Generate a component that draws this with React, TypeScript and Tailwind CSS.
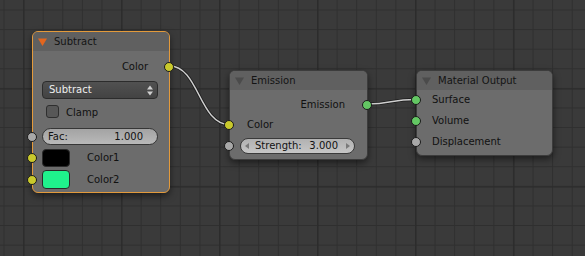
import React from "react";

const Socket = ({ cls, side }: { cls: string; side: "l" | "r" }) => (
  <span
    className={`absolute top-1/2 -translate-y-1/2 w-[10px] h-[10px] rounded-full border border-[#1a1a1a] ${cls} ${
      side === "l" ? "left-[-6px]" : "right-[-5px]"
    }`}
  />
);

const Tri = ({ color }: { color: string }) => (
  <svg width="9" height="8" viewBox="0 0 9 8" className="shrink-0">
    <polygon points="0,0.5 9,0.5 4.5,8" fill={color} />
  </svg>
);

const YELLOW = "bg-[#c9c92c]";
const GREEN = "bg-[#63c763]";
const GREY = "bg-[#a8a8a8]";

const Header = ({ title, tri }: { title: string; tri: string }) => (
  <div className="h-[19px] rounded-t-[5px] bg-[#606060] flex items-center pl-[5px]">
    <Tri color={tri} />
    <span className="ml-[7px] text-[#141414]">{title}</span>
  </div>
);

export default function App() {
  return (
    <div className="relative w-[585px] h-[256px] overflow-hidden font-['DejaVu_Sans',sans-serif] text-[10px] leading-none text-[#111] bg-[#3a3a3a] bg-[linear-gradient(to_right,#2a2a2a_1px,transparent_1px),linear-gradient(to_bottom,#2a2a2a_1px,transparent_1px),linear-gradient(to_right,#2f2f2f_1px,transparent_1px),linear-gradient(to_bottom,#2f2f2f_1px,transparent_1px)] bg-[size:98px_98px,98px_98px,19.6px_19.6px,19.6px_19.6px] bg-[position:23.5px_88.5px,23.5px_88.5px,3.5px_9.5px,3.5px_9.5px]">
      {/* links */}
      <svg className="absolute inset-0" width="585" height="256">
        <path d="M169.5,66 C199,66 199,124.5 229.5,124.5" stroke="#1c1c1c" strokeWidth="3.2" fill="none" />
        <path d="M169.5,66 C199,66 199,124.5 229.5,124.5" stroke="#cfcfcf" strokeWidth="1.4" fill="none" />
        <path d="M367.5,104 C391,104 391,99.5 415.5,99.5" stroke="#1c1c1c" strokeWidth="3.2" fill="none" />
        <path d="M367.5,104 C391,104 391,99.5 415.5,99.5" stroke="#cfcfcf" strokeWidth="1.4" fill="none" />
      </svg>

      {/* Subtract node */}
      <div className="absolute left-[32px] top-[31px] w-[138px] h-[162px] rounded-[6px] border border-[#e39a3b] bg-[#6c6c6c] shadow-[0_3px_7px_rgba(0,0,0,0.5)] flex flex-col">
        <Header title="Subtract" tri="#e2661f" />
        <div className="flex flex-col pt-[6px]">
          <div className="relative h-[19px] flex items-center justify-end pr-[21px]">
            <span>Color</span>
            <Socket cls={YELLOW} side="r" />
          </div>
          <div className="mt-[5px] pl-[9px]">
            <div className="w-[116px] h-[18px] rounded-[4px] border border-[#2c2c2c] bg-[linear-gradient(to_bottom,#515151,#434343)] flex items-center justify-between pl-[6px] pr-[4px] text-[#eeeeee]">
              <span>Subtract</span>
              <svg width="6" height="11" viewBox="0 0 6 11">
                <polygon points="0,4.5 6,4.5 3,0.5" fill="#cfcfcf" />
                <polygon points="0,6.5 6,6.5 3,10.5" fill="#cfcfcf" />
              </svg>
            </div>
          </div>
          <div className="mt-[6px] h-[13px] flex items-center pl-[13px]">
            <span className="w-[13px] h-[13px] rounded-[3px] border border-[#2e2e2e] bg-[#575757]" />
            <span className="ml-[7px] mt-[2px]">Clamp</span>
          </div>
          <div className="relative mt-[10px] pl-[9px]">
            <div className="w-[116px] h-[17px] rounded-full border border-[#363636] bg-[linear-gradient(to_bottom,#a3a3a3,#b9b9b9)] flex items-center justify-between pl-[5px] pr-[14px]">
              <span>Fac:</span>
              <span>1.000</span>
            </div>
            <Socket cls={GREY} side="l" />
          </div>
          <div className="relative mt-[4px] h-[18px] flex items-center pl-[9px]">
            <span className="w-[28px] h-[18px] rounded-[4px] border border-[#2a2a2a] bg-[#000000]" />
            <span className="ml-[17px]">Color1</span>
            <Socket cls={YELLOW} side="l" />
          </div>
          <div className="relative mt-[3px] h-[19px] flex items-center pl-[9px]">
            <span className="w-[28px] h-[19px] rounded-[4px] border border-[#2a2a2a] bg-[#1ff28c]" />
            <span className="ml-[17px]">Color2</span>
            <Socket cls={YELLOW} side="l" />
          </div>
        </div>
      </div>

      {/* Emission node */}
      <div className="absolute left-[229px] top-[70px] w-[139px] h-[90px] rounded-[6px] border border-[#3c3c3c] bg-[#6c6c6c] shadow-[0_3px_7px_rgba(0,0,0,0.5)] flex flex-col">
        <Header title="Emission" tri="#4b4b4b" />
        <div className="flex flex-col pt-[5px]">
          <div className="relative h-[20px] flex items-center justify-end pr-[22px]">
            <span>Emission</span>
            <Socket cls={GREEN} side="r" />
          </div>
          <div className="relative h-[20px] flex items-center pl-[17px]">
            <span>Color</span>
            <Socket cls={YELLOW} side="l" />
          </div>
          <div className="relative mt-[3px] pl-[10px]">
            <div className="w-[115px] h-[16px] rounded-full border border-[#3a3a3a] bg-[linear-gradient(to_bottom,#b1b1b1,#c6c6c6)] flex items-center pl-[4px] pr-[4px]">
              <svg width="4" height="6" viewBox="0 0 4 6" className="shrink-0">
                <polygon points="4,0 4,6 0,3" fill="#7a7a7a" />
              </svg>
              <span className="ml-[6px]">Strength:</span>
              <span className="ml-auto mr-[8px]">3.000</span>
              <svg width="4" height="6" viewBox="0 0 4 6" className="shrink-0">
                <polygon points="0,0 0,6 4,3" fill="#7a7a7a" />
              </svg>
            </div>
            <Socket cls={GREY} side="l" />
          </div>
        </div>
      </div>

      {/* Material Output node */}
      <div className="absolute left-[416px] top-[70px] w-[137px] h-[86px] rounded-[6px] border border-[#3c3c3c] bg-[#6c6c6c] shadow-[0_3px_7px_rgba(0,0,0,0.5)] flex flex-col">
        <Header title="Material Output" tri="#4b4b4b" />
        <div className="flex flex-col">
          <div className="relative h-[20px] flex items-center pl-[15px]">
            <span>Surface</span>
            <Socket cls={GREEN} side="l" />
          </div>
          <div className="relative h-[21px] flex items-center pl-[15px]">
            <span>Volume</span>
            <Socket cls={GREEN} side="l" />
          </div>
          <div className="relative h-[21px] flex items-center pl-[15px]">
            <span>Displacement</span>
            <Socket cls={GREY} side="l" />
          </div>
        </div>
      </div>
    </div>
  );
}
